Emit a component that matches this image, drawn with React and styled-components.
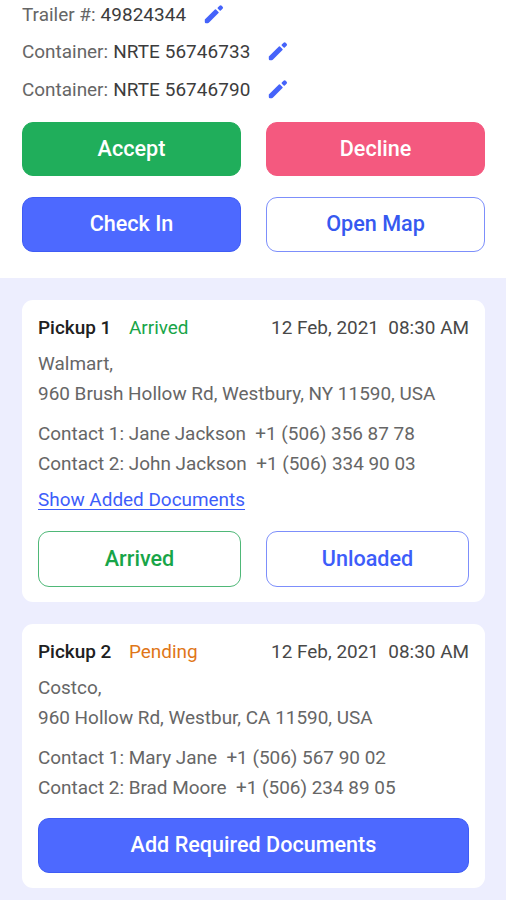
import React from 'react';
import styled, { createGlobalStyle } from 'styled-components';

const trailerInfo = [
	{ label: 'Trailer #:', value: '49824344' },
	{ label: 'Container:', value: 'NRTE 56746733' },
	{ label: 'Container:', value: 'NRTE 56746790' },
];

const PencilIcon = () => (
	<StyledPencil viewBox='0 0 20 20'>
		<path d='M.8 15.6 10.9 5.5a.8.8 0 0 1 1.1 0l2.5 2.5a.8.8 0 0 1 0 1.1L4.8 18.8a1.4 1.4 0 0 1-1 .4H2a1.2 1.2 0 0 1-1.2-1.2z' />
		<path d='M13.8 3.6 15.6 1.8a1.5 1.5 0 0 1 2.1 0l.9.9a1.5 1.5 0 0 1 0 2.1L16.8 6.6a.8.8 0 0 1-1.1 0l-1.9-1.9a.8.8 0 0 1 0-1.1z' />
	</StyledPencil>
);

const PickupCard = ({ title, status, color, company, address, contacts, children }) => (
	<StyledCard>
		<CardHeader>
			<Title>{title}</Title>
			<Status $color={color}>{status}</Status>
			<DateTime>{'12 Feb, 2021  08:30 AM'}</DateTime>
		</CardHeader>
		<Address>
			<Line>{company}</Line>
			<Line>{address}</Line>
		</Address>
		<Contacts>
			{contacts.map((contact) => (
				<Line key={contact}>{contact}</Line>
			))}
		</Contacts>
		{children}
	</StyledCard>
);

const App = () => {
	return (
		<Page>
			<GlobalStyle />
			<TopSection>
				{trailerInfo.map(({ label, value }) => (
					<InfoRow key={value}>
						<span>{label}</span>
						<InfoValue>{value}</InfoValue>
						<PencilIcon />
					</InfoRow>
				))}
				<Actions>
					<Button $bg='#20ae5b'>Accept</Button>
					<Button $bg='#f4597f'>Decline</Button>
					<Button $bg='#4d69ff' $border='#3f5cf5'>
						Check In
					</Button>
					<Button $color='#3659f0' $border='#7d8ffb'>
						Open Map
					</Button>
				</Actions>
			</TopSection>
			<Cards>
				<PickupCard
					title='Pickup 1'
					status='Arrived'
					color='#18a548'
					company='Walmart,'
					address='960 Brush Hollow Rd, Westbury, NY 11590, USA'
					contacts={[
						'Contact 1: Jane Jackson  +1 (506) 356 87 78',
						'Contact 2: John Jackson  +1 (506) 334 90 03',
					]}
				>
					<DocumentsLink href='#'>Show Added Documents</DocumentsLink>
					<CardActions $columns={2}>
						<Button $color='#18a548' $border='#4fb878'>
							Arrived
						</Button>
						<Button $color='#3d5dfa' $border='#7d8ffb'>
							Unloaded
						</Button>
					</CardActions>
				</PickupCard>
				<PickupCard
					title='Pickup 2'
					status='Pending'
					color='#df7618'
					company='Costco,'
					address='960 Hollow Rd, Westbur, CA 11590, USA'
					contacts={[
						'Contact 1: Mary Jane  +1 (506) 567 90 02',
						'Contact 2: Brad Moore  +1 (506) 234 89 05',
					]}
				>
					<CardActions $columns={1}>
						<Button $bg='#4d69ff' $border='#3f5cf5'>
							Add Required Documents
						</Button>
					</CardActions>
				</PickupCard>
			</Cards>
		</Page>
	);
};

export default App;

const GlobalStyle = createGlobalStyle`
	* {
		box-sizing: border-box;
	}
	body {
		margin: 0;
		background: #edeefe;
	}
`;

const Page = styled.div`
	width: 506px;
	height: 900px;
	overflow: hidden;
	background: #edeefe;
	color: #666;
	font-family: Roboto, sans-serif;
	font-size: 18.93px;
`;

const TopSection = styled.div`
	height: 278px;
	padding: 0 21px 0 22px;
	background: white;
`;

const InfoRow = styled.div`
	display: flex;
	align-items: center;
	height: 38px;
	&:first-child {
		height: 32px;
		padding-bottom: 4px;
	}
`;

const InfoValue = styled.span`
	margin: 0 18px 0 5px;
	color: #3c3c3c;
	letter-spacing: 0.08px;
`;

const StyledPencil = styled.svg`
	width: 20px;
	height: 20px;
	fill: #4563fa;
`;

const Actions = styled.div`
	display: grid;
	grid-template-columns: 1fr 1fr;
	grid-template-rows: 54px 55px;
	gap: 21px 25px;
	margin-top: 14px;
`;

const Button = styled.button`
	padding: 0 0 2px;
	border: 1px solid ${({ $border, $bg }) => $border || $bg};
	border-radius: 11px;
	background: ${({ $bg }) => $bg || 'white'};
	color: ${({ $color }) => $color || 'white'};
	font-family: inherit;
	font-size: 21.6px;
	font-weight: 500;
`;

const Cards = styled.div`
	display: flex;
	flex-direction: column;
	gap: 22px;
	padding: 22px 21px 0 22px;
`;

const StyledCard = styled.div`
	padding: 12px 16px 15px;
	border-radius: 11px;
	background: white;
`;

const CardHeader = styled.div`
	display: flex;
	height: 30px;
	line-height: 31px;
`;

const Title = styled.span`
	width: 91px;
	color: #202020;
	font-weight: 500;
`;

const Status = styled.span`
	color: ${({ $color }) => $color};
`;

const DateTime = styled.span`
	margin-left: auto;
	color: #484848;
	white-space: pre;
`;

const Address = styled.div`
	margin-top: 7px;
`;

const Contacts = styled.div`
	margin-top: 10px;
`;

const Line = styled.div`
	line-height: 30px;
	white-space: pre;
`;

const DocumentsLink = styled.a`
	display: block;
	margin-top: 6px;
	color: #3d5dfa;
	line-height: 30px;
	text-underline-offset: 3px;
	text-decoration-thickness: 1px;
`;

const CardActions = styled.div`
	display: grid;
	grid-template-columns: repeat(${({ $columns }) => $columns}, 1fr);
	grid-template-rows: ${({ $columns }) => ($columns > 1 ? 56 : 55)}px;
	gap: 25px;
	margin-top: ${({ $columns }) => ($columns > 1 ? 16 : 15)}px;
`;
